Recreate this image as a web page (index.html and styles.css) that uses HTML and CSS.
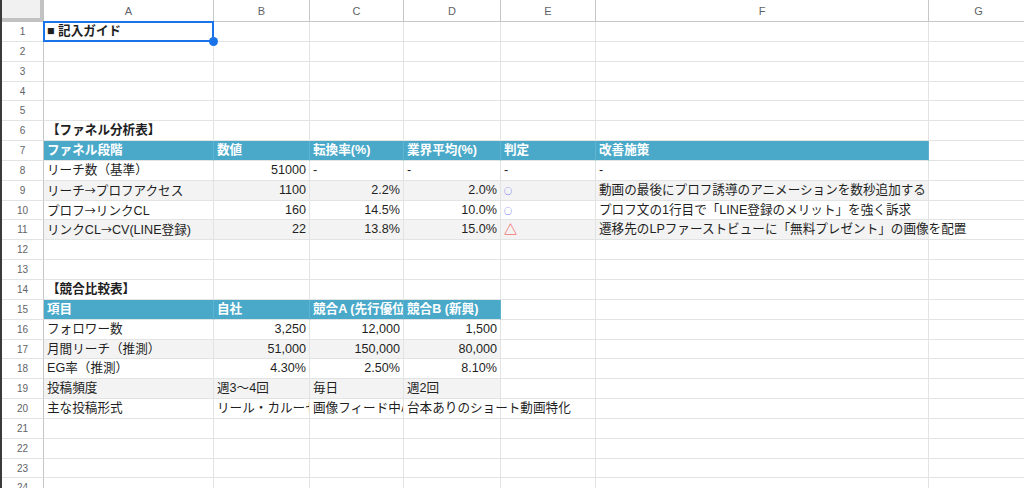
FILE: index.html
```html
<!doctype html>
<html>
<head>
    <meta charset="utf-8" />
    <title>記入ガイド</title>
    <link rel="stylesheet" href="styles.css">
</head>

<body>
    <div class="sheet">
        <!-- column headers -->
        <div class="corner"></div>
        <div class="ch">A</div><div class="ch">B</div><div class="ch">C</div><div class="ch">D</div>
        <div class="ch">E</div><div class="ch">F</div><div class="ch">G</div>

        <!-- 1 -->
        <div class="rh">1</div>
        <div class="c b sel-cell">■ 記入ガイド<span class="sel"></span><span class="handle"></span></div>
        <div class="c"></div><div class="c"></div><div class="c"></div><div class="c"></div><div class="c"></div><div class="c"></div>
        <!-- 2-5 -->
        <div class="rh">2</div>
        <div class="c"></div><div class="c"></div><div class="c"></div><div class="c"></div><div class="c"></div><div class="c"></div><div class="c"></div>
        <div class="rh">3</div>
        <div class="c"></div><div class="c"></div><div class="c"></div><div class="c"></div><div class="c"></div><div class="c"></div><div class="c"></div>
        <div class="rh">4</div>
        <div class="c"></div><div class="c"></div><div class="c"></div><div class="c"></div><div class="c"></div><div class="c"></div><div class="c"></div>
        <div class="rh">5</div>
        <div class="c"></div><div class="c"></div><div class="c"></div><div class="c"></div><div class="c"></div><div class="c"></div><div class="c"></div>

        <!-- funnel table -->
        <div class="rh">6</div>
        <div class="c b">【ファネル分析表】</div>
        <div class="c"></div><div class="c"></div><div class="c"></div><div class="c"></div><div class="c"></div><div class="c"></div>

        <div class="rh">7</div>
        <div class="c hd">ファネル段階</div>
        <div class="c hd">数値</div>
        <div class="c hd">転換率(%)</div>
        <div class="c hd">業界平均(%)</div>
        <div class="c hd">判定</div>
        <div class="c hd">改善施策</div>
        <div class="c"></div>

        <div class="rh">8</div>
        <div class="c">リーチ数（基準）</div>
        <div class="c num">51000</div>
        <div class="c">-</div>
        <div class="c">-</div>
        <div class="c">-</div>
        <div class="c">-</div>
        <div class="c"></div>

        <div class="rh">9</div>
        <div class="c bd">リーチ<span class="arr">→</span>プロフアクセス</div>
        <div class="c bd num">1100</div>
        <div class="c bd num">2.2%</div>
        <div class="c bd num">2.0%</div>
        <div class="c bd"><span class="ok">○</span></div>
        <div class="c bd">動画の最後にプロフ誘導のアニメーションを数秒追加する</div>
        <div class="c"></div>

        <div class="rh">10</div>
        <div class="c">プロフ<span class="arr">→</span>リンクCL</div>
        <div class="c num">160</div>
        <div class="c num">14.5%</div>
        <div class="c num">10.0%</div>
        <div class="c"><span class="ok">○</span></div>
        <div class="c">プロフ文の1行目で「LINE登録のメリット」を強く訴求</div>
        <div class="c"></div>

        <div class="rh">11</div>
        <div class="c bd">リンクCL<span class="arr">→</span>CV(LINE登録)</div>
        <div class="c bd num">22</div>
        <div class="c bd num">13.8%</div>
        <div class="c bd num">15.0%</div>
        <div class="c bd"><span class="warn">△</span></div>
        <div class="c bd">遷移先のLPファーストビューに「無料プレゼント」の画像を配置</div>
        <div class="c"></div>

        <div class="rh">12</div>
        <div class="c"></div><div class="c"></div><div class="c"></div><div class="c"></div><div class="c"></div><div class="c"></div><div class="c"></div>
        <div class="rh">13</div>
        <div class="c"></div><div class="c"></div><div class="c"></div><div class="c"></div><div class="c"></div><div class="c"></div><div class="c"></div>

        <!-- competitor table -->
        <div class="rh">14</div>
        <div class="c b">【競合比較表】</div>
        <div class="c"></div><div class="c"></div><div class="c"></div><div class="c"></div><div class="c"></div><div class="c"></div>

        <div class="rh">15</div>
        <div class="c hd">項目</div>
        <div class="c hd">自社</div>
        <div class="c hd clip">競合A (先行優位)</div>
        <div class="c hd">競合B (新興)</div>
        <div class="c"></div><div class="c"></div><div class="c"></div>

        <div class="rh">16</div>
        <div class="c">フォロワー数</div>
        <div class="c num">3,250</div>
        <div class="c num">12,000</div>
        <div class="c num">1,500</div>
        <div class="c"></div><div class="c"></div><div class="c"></div>

        <div class="rh">17</div>
        <div class="c bd">月間リーチ（推測）</div>
        <div class="c bd num">51,000</div>
        <div class="c bd num">150,000</div>
        <div class="c bd num">80,000</div>
        <div class="c"></div><div class="c"></div><div class="c"></div>

        <div class="rh">18</div>
        <div class="c">EG率（推測）</div>
        <div class="c num">4.30%</div>
        <div class="c num">2.50%</div>
        <div class="c num">8.10%</div>
        <div class="c"></div><div class="c"></div><div class="c"></div>

        <div class="rh">19</div>
        <div class="c bd">投稿頻度</div>
        <div class="c bd">週3〜4回</div>
        <div class="c bd">毎日</div>
        <div class="c bd">週2回</div>
        <div class="c"></div><div class="c"></div><div class="c"></div>

        <div class="rh">20</div>
        <div class="c">主な投稿形式</div>
        <div class="c clip">リール・カルーセル</div>
        <div class="c clip">画像フィード中心</div>
        <div class="c">台本ありのショート動画特化</div>
        <div class="c"></div><div class="c"></div><div class="c"></div>

        <div class="rh">21</div>
        <div class="c"></div><div class="c"></div><div class="c"></div><div class="c"></div><div class="c"></div><div class="c"></div><div class="c"></div>
        <div class="rh">22</div>
        <div class="c"></div><div class="c"></div><div class="c"></div><div class="c"></div><div class="c"></div><div class="c"></div><div class="c"></div>
        <div class="rh">23</div>
        <div class="c"></div><div class="c"></div><div class="c"></div><div class="c"></div><div class="c"></div><div class="c"></div><div class="c"></div>
        <div class="rh">24</div>
        <div class="c"></div><div class="c"></div><div class="c"></div><div class="c"></div><div class="c"></div><div class="c"></div><div class="c"></div>
    </div>
</body>

</html>
```

FILE: styles.css
```css
:root {
    --grid: #e2e3e3;
    --head-line: #c7c7c7;
    --band: #f3f3f3;
    --accent: #4aa9c9;
    --ink: #1f1f1f;
}
html, body {
    background-color: #fff;
}
body {
    margin: 0;
    height: 488px;
    overflow: hidden;
    color: var(--ink);
    font-family: "Liberation Sans", "Noto Sans CJK JP", sans-serif;
}

.sheet {
    display: grid;
    grid-template-columns: 42px 170px 96px 94px 97px 95px 333px 100px;
    grid-template-rows: 22px;
    grid-auto-rows: 19.85px;
    border-left: 2px solid #3a3a3a;
}

/* headers */
.corner {
    background-color: #f1f1f1;
    border-right: 4px solid #c2c2c2;
    border-bottom: 4px solid #c2c2c2;
}
.ch {
    border-right: 1px solid var(--head-line);
    border-bottom: 1px solid var(--head-line);
    color: #5f6368;
    font-size: 11px;
    line-height: 22px;
    text-align: center;
}
.rh {
    border-right: 1px solid var(--head-line);
    border-bottom: 1px solid var(--grid);
    color: #5f6368;
    font-size: 10px;
    line-height: 19px;
    text-align: center;
}

/* cells */
.c {
    position: relative;
    padding: 0 3px;
    border-right: 1px solid var(--grid);
    border-bottom: 1px solid var(--grid);
    font-size: 12.6px;
    line-height: 19px;
    white-space: nowrap;
}
    .c.b {
        font-weight: bold;
    }
    .c.num {
        text-align: right;
    }
    .c.clip {
        overflow: hidden;
        text-overflow: clip;
    }
    .c.bd {
        background-color: var(--band);
    }
    .c.hd {
        background-color: var(--accent);
        border-right-color: #5fb3d0;
        color: #fff;
        font-weight: bold;
    }
    .c.sel-cell {
        z-index: 1;
    }

.arr {
    font-family: "Noto Sans CJK JP", sans-serif;
    font-size: 11px;
}
.ok {
    color: #5a5cf0;
    font-family: "Noto Sans CJK JP", sans-serif;
    font-size: 8px;
    font-weight: bold;
    vertical-align: 1px;
}
.warn {
    color: #f0393b;
    font-size: 13px;
}

/* active cell */
.sel {
    position: absolute;
    top: -1px;
    left: -1px;
    right: -1px;
    bottom: -1px;
    border: 2px solid #1a73e8;
}
.handle {
    position: absolute;
    right: -5px;
    bottom: -5px;
    width: 9px;
    height: 9px;
    border-radius: 50%;
    background-color: #1a73e8;
}
```
